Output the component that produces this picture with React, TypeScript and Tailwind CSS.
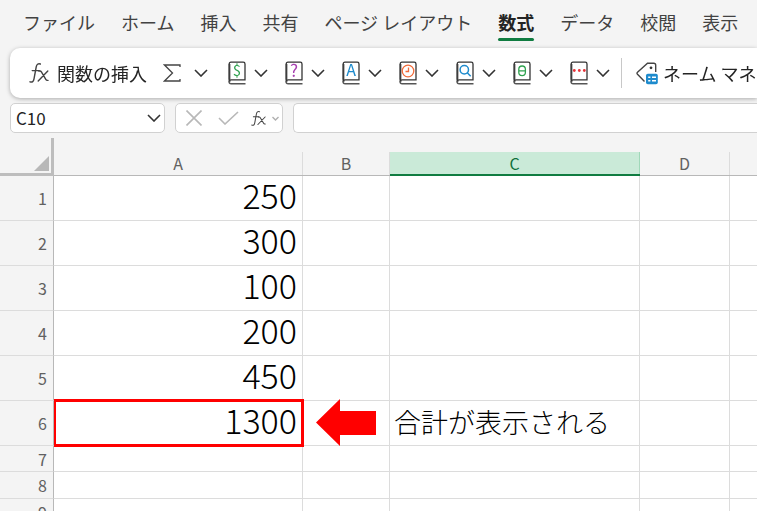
import type { ReactNode } from 'react';

const tabs = ['ファイル', 'ホーム', '挿入', '共有', 'ページ レイアウト', '数式', 'データ', '校閲', '表示'];

interface Row {
  id: number;
  height: string;
  value?: string;
  note?: string;
}

const rows: Row[] = [
  { id: 1, height: 'h-[45px]', value: '250' },
  { id: 2, height: 'h-[45px]', value: '300' },
  { id: 3, height: 'h-[45px]', value: '100' },
  { id: 4, height: 'h-[45px]', value: '200' },
  { id: 5, height: 'h-[45px]', value: '450' },
  { id: 6, height: 'h-[45px]', value: '1300', note: '合計が表示される' },
  { id: 7, height: 'h-[26px]' },
  { id: 8, height: 'h-[27px]' },
  { id: 9, height: 'h-[27px]' },
];

const Chevron = () => (
  <svg width="14" height="8" viewBox="0 0 14 8" fill="none" stroke="#333" strokeWidth="1.6">
    <path d="M1 1l6 6 6-6" />
  </svg>
);

const FunctionIcon = ({ className }: { className: string }) => (
  <svg className={className} viewBox="0 0 20 20" fill="none" stroke="#444" strokeWidth="1.4" strokeLinecap="round">
    <path d="M1 18.800c2.300.8 3.500-.2 4-3L7.200 4C7.700 1.300 9 .3 11.400 1M3.200 7.600h7" />
    <path d="M9.800 8h1.200c.7 0 1 .3 1.400.9l4.400 7.500c.4.700.7 1 1.400 1h.8M18.800 8L9.200 18" />
  </svg>
);

const SigmaIcon = () => (
  <svg width="18" height="18" viewBox="0 0 18 18" fill="none" stroke="#444" strokeWidth="1.3">
    <path d="M17 3V1H1.500l8 8-8 8H17v-2" />
  </svg>
);

const BookIcon = ({ children }: { children: ReactNode }) => (
  <svg className="overflow-visible" width="18" height="24" viewBox="0 0 18 24" fill="none">
    <path d="M1.500 21V3" stroke="#777" strokeWidth="2" />
    <path d="M1 20.500c0 1.600.8 2.300 2.200 2.300H17.500" stroke="#555" strokeWidth="1.400" />
    <path d="M1.200 18.800V3c0-1.200.6-1.800 1.800-1.800h12.200c1.200 0 1.800.6 1.800 1.800v15.800H3.200c-1.200 0-2 .7-2 1.800" stroke="#333" strokeWidth="1.300" />
    {children}
  </svg>
);

const library = [
  {
    label: '財務',
    icon: <text x="9" y="15" textAnchor="middle" fontSize="15" fill="#2fa14f">$</text>,
  },
  {
    label: '論理',
    icon: <text x="9" y="16" textAnchor="middle" fontSize="17" fill="#a63fb0">?</text>,
  },
  {
    label: '文字列操作',
    icon: <text x="9" y="15" textAnchor="middle" fontSize="16" fill="#1e8bcd">A</text>,
  },
  {
    label: '日付/時刻',
    icon: (
      <g stroke="#f26b3a" strokeWidth="1.3">
        <circle cx="9" cy="10" r="5.800" />
        <path d="M9.500 6.500v4H6.500" />
      </g>
    ),
  },
  {
    label: '検索/行列',
    icon: (
      <g stroke="#1e8bcd" strokeWidth="1.5">
        <circle cx="8.300" cy="8.800" r="4.200" />
        <path d="M11.300 11.800l3.400 3.400" />
      </g>
    ),
  },
  {
    label: '数学/三角',
    icon: (
      <g stroke="#2fa14f" strokeWidth="1.3">
        <rect x="5.800" y="5" width="6.600" height="9.600" rx="3.300" />
        <path d="M6 9.800h6.200" />
      </g>
    ),
  },
  {
    label: 'その他の関数',
    icon: (
      <g fill="#e8333a">
        <circle cx="4.300" cy="9.500" r="1.400" />
        <circle cx="9.300" cy="9.500" r="1.400" />
        <circle cx="14.300" cy="9.500" r="1.400" />
      </g>
    ),
  },
];

const NameManagerIcon = () => (
  <svg width="22" height="24" viewBox="0 0 22 24" fill="none">
    <path d="M19.700 11V4.200c0-1.200-.7-1.900-1.900-1.900h-6.300L1.500 11.200c-.7.7-.7 1.300 0 2L8.500 20.500" stroke="#444" strokeWidth="1.4" />
    <circle cx="15" cy="6.800" r="1.400" fill="#333" />
    <rect x="10" y="12.700" width="11.800" height="10.600" rx="1.800" fill="#1e8bcd" />
    <path d="M12.200 16.200h2.200M16 16.200h4M12.200 19.800h2.200M16 19.800h4" stroke="#fff" strokeWidth="1.400" />
  </svg>
);

const MenuTabs = () => (
  <nav className="flex h-12 shrink-0 items-start gap-[26px] overflow-hidden whitespace-nowrap pl-[23px] pt-1.5 text-lg leading-8 text-[#424242]">
    {tabs.map((tab) =>
      tab === '数式' ? (
        <button key={tab} className="shrink-0 font-bold text-[#242424]">
          {tab}
          <span className="block h-[3px] rounded-full bg-[#107c41]" />
        </button>
      ) : (
        <button key={tab} className="shrink-0">{tab}</button>
      ),
    )}
  </nav>
);

const Toolbar = () => (
  <div className="ml-2.5 flex h-[50px] shrink-0 items-center overflow-hidden whitespace-nowrap rounded-l-[10px] bg-white pl-[19px] text-lg text-[#242424]">
    <button className="flex shrink-0 items-center gap-2">
      <FunctionIcon className="size-5" />
      関数の挿入
    </button>
    <button className="ml-4 flex shrink-0 items-center gap-[13px]" aria-label="オート SUM">
      <SigmaIcon />
      <Chevron />
    </button>
    <div className="ml-5 flex shrink-0 gap-[17px]">
      {library.map(({ label, icon }) => (
        <button key={label} className="flex items-center gap-2" aria-label={label}>
          <BookIcon>{icon}</BookIcon>
          <Chevron />
        </button>
      ))}
    </div>
    <div className="ml-[11px] h-[30px] w-px shrink-0 bg-[#c8c8c8]" />
    <button className="ml-3.5 flex shrink-0 items-center gap-[5px]">
      <NameManagerIcon />
      ネーム マネ
    </button>
  </div>
);

const FormulaBar = () => (
  <div className="flex h-[30px] shrink-0 gap-2.5 pl-2.5">
    <div className="flex w-[155px] shrink-0 items-center rounded-[5px] border border-[#d1d1d1] bg-white pl-[5px] pr-[3px]">
      <input className="min-w-0 flex-1 text-[17px] text-[#242424] outline-none" aria-label="名前ボックス" defaultValue="C10" />
      <button aria-label="名前の一覧">
        <Chevron />
      </button>
    </div>
    <div className="flex w-[108px] shrink-0 items-center rounded-[5px] border border-[#d1d1d1] bg-white pl-2.5">
      <button aria-label="キャンセル">
        <svg width="16" height="16" viewBox="0 0 16 16" fill="none" stroke="#b8b8b8" strokeWidth="1.6">
          <path d="M.5.5l15 15M15.500.5l-15 15" />
        </svg>
      </button>
      <button className="ml-4" aria-label="入力">
        <svg width="21" height="14" viewBox="0 0 21 14" fill="none" stroke="#b8b8b8" strokeWidth="1.6">
          <path d="M1 7l6 6L20 1" />
        </svg>
      </button>
      <button className="ml-3 flex items-center gap-1.5" aria-label="関数の挿入">
        <FunctionIcon className="size-[15px]" />
        <svg width="7" height="5" viewBox="0 0 7 5" fill="none" stroke="#b0b0b0" strokeWidth="1.4">
          <path d="M.5 1l3 3 3-3" />
        </svg>
      </button>
    </div>
    <input className="min-w-0 flex-1 rounded-l-[5px] border border-r-0 border-[#d1d1d1] bg-white px-2 outline-none" aria-label="数式バー" />
  </div>
);

const ColumnHeader = ({ name }: { name: string }) => (
  <th className="border-b border-[#b8b8b8] p-0 align-bottom font-normal">
    <div className="h-[23px] border-r border-[#dcdcdc] leading-[23px]">{name}</div>
  </th>
);

const Sheet = () => (
  <table className="w-full table-fixed border-separate border-spacing-0 bg-white">
    <colgroup>
      <col className="w-[54px]" />
      <col className="w-[249px]" />
      <col className="w-[87px]" />
      <col className="w-[250px]" />
      <col className="w-[90px]" />
      <col />
    </colgroup>
    <thead className="bg-[#f4f4f4] text-base text-[#616161]">
      <tr className="h-[38px]">
        <th className="border-r-[3px] border-b-[3px] border-[#bdbdbd] p-0 pr-0.5 pb-0.5 align-bottom">
          <svg className="ml-auto" width="15" height="15" viewBox="0 0 15 15" fill="#b8b8b8">
            <path d="M15 0v15H0z" />
          </svg>
        </th>
        <ColumnHeader name="A" />
        <ColumnHeader name="B" />
        <th className="border-b-2 border-[#107c41] p-0 align-bottom font-normal text-[#0f703b]">
          <div className="h-[22px] border-r border-[#a0d8b9] bg-[#caead8] leading-[23px]">C</div>
        </th>
        <ColumnHeader name="D" />
        <th className="border-b border-[#b8b8b8] p-0" />
      </tr>
    </thead>
    <tbody>
      {rows.map(({ id, height, value, note }) => (
        <tr key={id} className={height}>
          <th className="border-r border-b border-r-[#b8b8b8] border-b-[#dcdcdc] bg-[#f4f4f4] p-0 pr-1.5 text-right text-base leading-6 font-normal text-[#616161]">
            {id}
          </th>
          <td className="relative border-r border-b border-[#dcdcdc] p-0 pr-[5px] text-right align-top text-[34px] leading-[38px] font-light text-black">
            {value}
            {note && <span className="absolute -top-0.5 -right-0.5 -bottom-0.5 left-0 z-10 border-[3px] border-l-2 border-[#ff0000]" />}
          </td>
          <td className="relative border-r border-b border-[#dcdcdc] p-0">
            {note && (
              <svg className="absolute -top-0.5 left-[13px]" width="60" height="47" viewBox="0 0 60 47" fill="#ff0000">
                <path d="M0 23.500L24 0v12h36v24H24v11z" />
              </svg>
            )}
          </td>
          <td className="border-r border-b border-[#dcdcdc] p-0 pl-1 align-top text-[27px] leading-[42px] font-light whitespace-nowrap text-black">
            {note}
          </td>
          <td className="border-r border-b border-[#dcdcdc] p-0" />
          <td className="border-b border-[#dcdcdc] p-0" />
        </tr>
      ))}
    </tbody>
  </table>
);

export default function App() {
  return (
    <div className="flex h-screen flex-col overflow-hidden bg-[#f4f4f4] font-['Noto_Sans_CJK_JP','Noto_Sans',sans-serif]">
      <MenuTabs />
      <div className="flex shrink-0 flex-col rounded-l-[10px] drop-shadow-[0_1px_2px_rgba(0,0,0,0.3)]">
        <Toolbar />
      </div>
      <div className="py-[5px]">
        <FormulaBar />
      </div>
      <main className="min-h-0 flex-1 overflow-hidden">
        <Sheet />
      </main>
    </div>
  );
}
